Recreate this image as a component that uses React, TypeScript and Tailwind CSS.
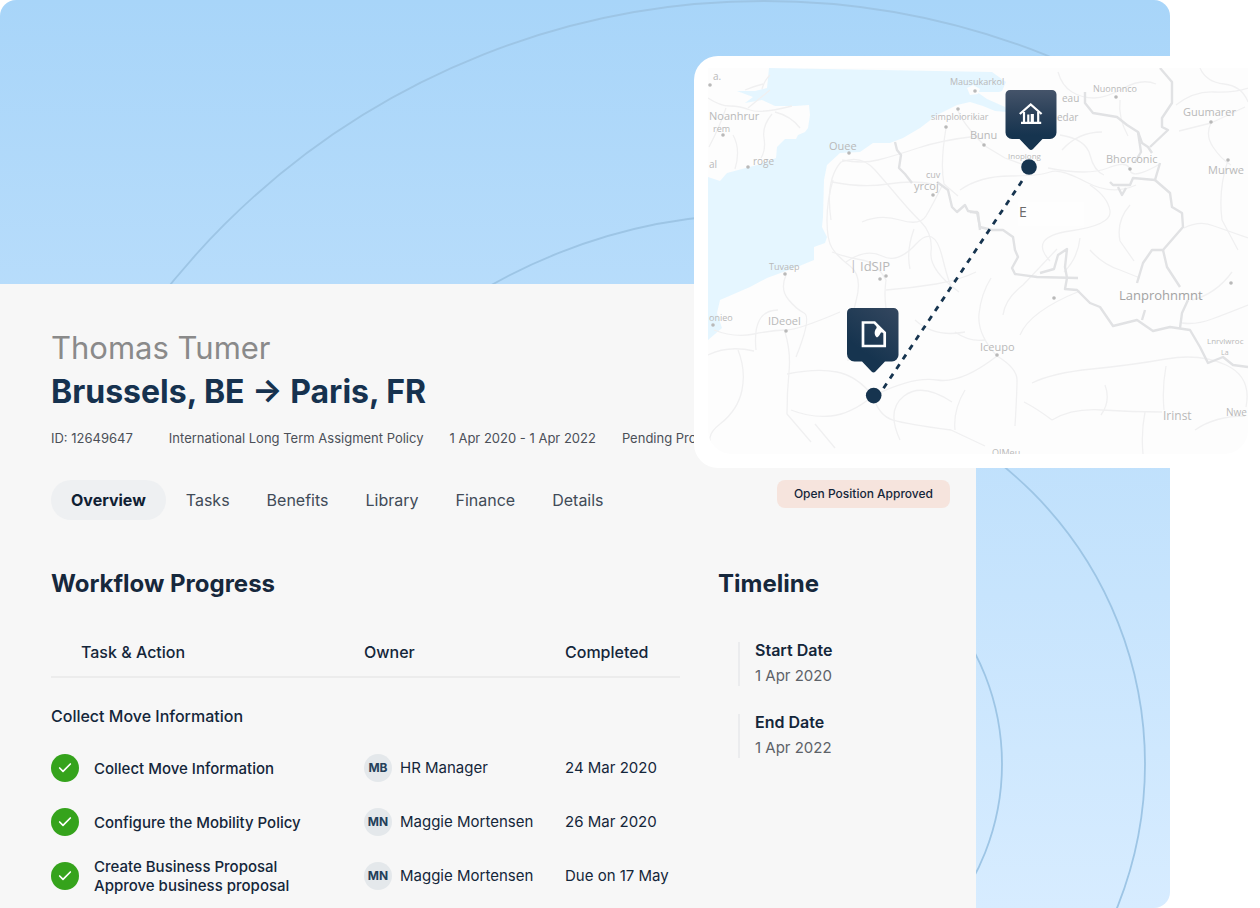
import { Check } from 'lucide-react';
import { useState } from 'react';

const tabs = ['Overview', 'Tasks', 'Benefits', 'Library', 'Finance', 'Details'];

const tasks = [
  { lines: ['Collect Move Information'], initials: 'MB', owner: 'HR Manager', completed: '24 Mar 2020' },
  { lines: ['Configure the Mobility Policy'], initials: 'MN', owner: 'Maggie Mortensen', completed: '26 Mar 2020' },
  {
    lines: ['Create Business Proposal', 'Approve business proposal'],
    initials: 'MN',
    owner: 'Maggie Mortensen',
    completed: 'Due on 17 May',
  },
];

const timeline = [
  { label: 'Start Date', date: '1 Apr 2020' },
  { label: 'End Date', date: '1 Apr 2022' },
];

// Map place names: text, x, baseline y, font size
const places: [string, number, number, number][] = [
  ['a.', 713, 80, 10],
  ['Noanhrur', 709, 120, 11],
  ['rem', 713, 132, 9],
  ['al', 709, 168, 10],
  ['roge', 753, 165, 10],
  ['Ouee', 829, 150, 11],
  ['Mausukarkol', 950, 85, 9],
  ['simploiorikiar', 931, 120, 9],
  ['Bunu', 970, 139, 11],
  ['cuv', 926, 178, 9],
  ['yrcoj', 914, 190, 11],
  ['eau', 1062, 102, 10],
  ['edar', 1057, 121, 10],
  ['Nuonnnco', 1093, 92, 9],
  ['Guumarer', 1183, 116, 11],
  ['Murwe', 1208, 174, 11],
  ['Bhorconic', 1106, 163, 11],
  ['Inoplong', 1008, 159, 8],
  ['Tuvaep', 769, 270, 9],
  ['IdSIP', 860, 271, 13],
  ['|', 850, 270, 12],
  ['onieo', 709, 321, 9],
  ['IDeoel', 768, 325, 11],
  ['Iceupo', 980, 351, 11],
  ['Lnrvlwroc', 1207, 344, 8],
  ['La', 1221, 355, 7],
  ['Irinst', 1163, 420, 12],
  ['Nwe', 1226, 416, 10],
  ['OIMeu', 992, 456, 9],
];

const towns: [number, number][] = [
  [710, 85], [723, 135], [748, 167], [849, 153], [975, 91], [958, 109], [946, 127], [984, 145],
  [933, 195], [1116, 97], [1211, 122], [1228, 160], [1130, 169], [785, 274], [880, 279], [886, 276],
  [713, 325], [786, 331], [997, 355], [1054, 298], [1231, 283],
];

const borders = [
  'M895 142l2 8 4 5-2 13 6 6 7 9',
  'M937 182l11 8 4 17 5 5 8-7 3 6 10 2 2 17',
  'M970 212h7l3 15 12 3 11 0 10 7 2 13 3 7-6 11 3 6 22 3 41 1',
  'M1067 278l-2 11 12 1 13 13 10 4 13 19 24-6 16 11 17-4 20 3 10 17 8 16 15-6 10 8 15 2',
  'M1040 273l14-4 4-14 9-6-2 18 2 11',
  'M1085 92v11l8 10 24 4 10 8 11 7 4 11 6 4 4 6',
  'M1160 68l12 14v21l-10 15v9l6 3-18 17',
  'M1138 132l3 20-6 10M1160 163l-5 17-22-2-3 7-17 0-3-3M1118 187l4 8 4-7',
  'M1155 180l15 13 2 14 10 6 1 14-20 23h-11l-9 13-6 20',
  'M1163 250l4 17 13 20',
  'M1145 310l-3 10M1188 300l-6 13-2 15',
];

const roads = [
  'M708 98q12 8 22 8t20 4 42-4M772 114q-10 12-8 24t-3 20M726 108q-6 18-17 39M748 108l22-18M775 112q16 4 25 16',
  'M733 135q8 14 2 34M745 90q10-4 18-6M770 75q-6 6-8 14',
  'M833 180q-6 20-6 40t5 28 18 18 6 35-8 60M842 160q20 4 36 0t40-12 60-12',
  'M831 220q-6-40 10-58 20-8 34 8t24 28 22 24 10 30 28 40M832 182q30 6 56 2t44 0',
  'M946 128q-6 36-2 56l14 12M942 186q-10 20-16 30t-26 4-38 2M960 190q20-14 50-14t40-4 36 10 50 3',
  'M914 229q-8 22-4 40M886 280q-2 14 0 28M886 290q26-2 50-6t40-12M886 280q-10-18-24-20t-30-8',
  'M786 275q-6 14 2 24t16 14-8 44M846 262q20-14 36-6t34-12 26 12 10 30',
  'M785 332q6 20 4 40t-2 42l24 28M738 350q8 20 4 40t-22 34-4 26M714 330q20 8 40 4t32-4 54-18',
  'M787 374q30-6 50-2t36 24M873 396q-22 18-42 20t-40-6M873 396q6 20 20 24t58 10l34 16M873 396q40-20 64-16t60-24',
  'M997 356q20 12 20 24t-2 46M997 356q-20-22-18-42t12-36M1003 315q2-16 20-30l34-36M1020 335q10-24 60-44',
  'M1032 383q20-10 60-14t74-10 60 6 20 42M1052 420q20-12 50-10t60 2M1166 366q-4 22-2 44M1145 412q-4 20-2 42M1052 420q-16-12-28-18',
  'M1048 168q40 8 60 0t22 2 30-6M1090 185q18 12 20 26t-40 20-20 30M1130 205q-14 16-10 36l14 20M1184 228q16-8 30-2l34 12',
  'M1211 123q-6 12 2 24t18 18M1211 123l-32 8M1176 105q18-14 38-13t34-4M1211 123l34-16M1228 160q-10 30-6 60l16 30',
  'M1058 72q4 14 14 20t22 6 30-10 32-4M1120 100q-2 18 8 36M1062 150q16-18 40-18M1060 135q26 4 30 20t14 20',
  'M1182 323q14 2 30-4t36-14M1192 300q24-6 40-28M1090 250q12 14 30 20l20 8M985 146l20 12 22 8M957 108q4 14 28 38',
  'M708 355q20-10 46-4M815 424l20 24M955 332q14 10 30 8M955 430q-2-20 10-40M1080 238q-2 20-16 34M1195 430q20-14 50-14',
  'M900 440q-14-30 4-44t48 6M915 320q20 18 50 12M756 350q-4-40 22-40M1105 385q6 16-4 30M1200 68q6 14 24 16t24 18',
];

function WorldMap() {
  return (
    <svg
      viewBox="708 68 540 386"
      preserveAspectRatio="xMidYMid slice"
      className="block w-full rounded-b-3xl"
      role="img"
      aria-label="Route between Brussels and Paris"
      fontFamily="'Open Sans', sans-serif"
    >
      <defs>
        <linearGradient id="pin" x1="0" y1="0" x2="0" y2="1">
          <stop offset="0" stopColor="#45546a" />
          <stop offset="0.35" stopColor="#2e435b" />
          <stop offset="0.75" stopColor="#16344f" />
        </linearGradient>
        <linearGradient id="pinSoft" x1="1" y1="0" x2="0.4" y2="1">
          <stop offset="0" stopColor="#34475f" />
          <stop offset="0.8" stopColor="#16344f" />
        </linearGradient>
      </defs>
      <rect x="708" y="68" width="540" height="386" fill="#fdfdfd" />

      {/* Sea */}
      <path
        fill="#e5f6ff"
        d="M769 68l-2 20-12 3-18 0 16 6-8 6 17-3 13 6 20 0 14-1 1 10-2 13-3 4-7 3-2 4-11 0-8 8-1 11-19 7-15 4-15 4-7 8-12-4v163l14-12-5-15 3-13 30-13 17-9 30-11 17-7 0-13 11-4 2-6-5-10 1-10 1-37 3-15 13-12 20-1 13-9h17l13-5 17-10 17-13 20-10 13-3 13 4 12 5 12 1-2-5-18-8-10-7 22 0 3-1 4-9-14-10z"
      />
      <path fill="#fdfdfd" d="M967 88l6-3 7 4-2 5-8 1z" />

      <g fill="none" stroke="#f0f0f1" strokeWidth="1.3" strokeLinejoin="round">
        {roads.map((d) => (
          <path key={d} d={d} />
        ))}
      </g>
      <g fill="none" stroke="#e1e2e4" strokeWidth="2.4" strokeLinejoin="round">
        {borders.map((d) => (
          <path key={d} d={d} />
        ))}
      </g>
      <g fill="#b9b9b9">
        {towns.map(([x, y]) => (
          <circle key={`${x}-${y}`} cx={x} cy={y} r="1.8" />
        ))}
        {places.map(([name, x, y, size]) => (
          <text key={name} x={x} y={y} fontSize={size}>
            {name}
          </text>
        ))}
      </g>
      <text x="1119" y="300" fontSize="13" fill="#a3a3a3">Lanprohnmnt</text>
      <rect x="1018" y="202" width="66" height="24" fill="#fefefe" />
      <text x="1019" y="217" fontSize="14" fill="#6b6b6b">E</text>

      {/* Route */}
      <path d="M1022 181L883 389" stroke="#16344f" strokeWidth="2.8" strokeDasharray="5.6 6" fill="none" />
      <circle cx="1029" cy="167" r="7.8" fill="#16344f" />
      <circle cx="873.7" cy="395.6" r="7.8" fill="#16344f" />

      {/* Home pin */}
      <path
        fill="url(#pin)"
        d="M1010 90h42a4.500 4.500 0 0 1 4.500 4.500v38a6.500 6.500 0 0 1-6.500 6.500h-7.500l-9.500 10q-2 2-4 0l-9.500-10h-7.500a6.500 6.500 0 0 1-6.500-6.500v-38a4.500 4.500 0 0 1 4.500-4.500z"
      />
      <g fill="none" stroke="#fff" strokeWidth="2.200">
        <path d="M1019.800 114l10.900-9.600 10.900 9.600" />
        <path d="M1024 112v10.500M1038.200 112v10.500M1028.300 122v-7.500" />
        <path d="M1032.300 114v8" strokeWidth="3.200" />
        <path d="M1021 122.800h20.200" />
      </g>

      {/* Document pin */}
      <path
        fill="url(#pinSoft)"
        d="M851.500 308h42a5 5 0 0 1 5 5v42a6.500 6.500 0 0 1-6.500 6.500h-7l-9.500 10q-2 2-4 0l-9.500-10h-7.500a7.500 7.500 0 0 1-7.500-7.500v-41a5 5 0 0 1 4.500-5z"
      />
      <path d="M863 322.500h11.500l10.200 10.200v13.300h-21.700z" fill="none" stroke="#fff" strokeWidth="2.700" />
      <path d="M876.500 325.500c.5 2 0 3-1 4-1.500 3-1 6.500 1.500 8 2-1 3-3.500 4-5l4.500-.5z" fill="#fff" />
    </svg>
  );
}

export default function App() {
  const [activeTab, setActiveTab] = useState('Overview');

  return (
    <div className="relative min-h-screen overflow-hidden bg-white pr-[90px] font-['Inter',sans-serif] text-[#14263a]">
      <div className="relative flex min-h-screen flex-col overflow-hidden rounded-t-2xl rounded-br-2xl bg-gradient-to-b from-[#a8d5f9] to-[#d7ecff] pt-[284px]">
        {/* Rings behind the panel */}
        <svg className="absolute inset-0 h-full w-full" aria-hidden="true">
          <g fill="none" stroke="#9dc5e5" strokeWidth="1.8">
            <circle cx="761" cy="764" r="241" />
            <circle cx="761" cy="764" r="384" />
            <circle cx="762" cy="764" r="550" />
            <circle cx="764" cy="764" r="763" />
          </g>
        </svg>

        <main className="relative mr-[194px] flex-1 bg-[#f7f7f7] pt-11 pr-[26px] pl-[51px]">
          <header>
            <p className="text-[31px] leading-10 text-[#8a8a8a]">Thomas Tumer</p>
            <h1 className="mt-1 text-[32px] leading-10 font-bold text-[#16324f]">Brussels, BE → Paris, FR</h1>
            <div className="mt-4 flex text-[13px] leading-5 whitespace-nowrap text-[#4b5058]">
              <span className="mr-9">ID: 12649647</span>
              <span className="mr-[26px]">International Long Term Assigment Policy</span>
              <span className="mr-[26px]">1 Apr 2020 - 1 Apr 2022</span>
              <span>Pending Proposal</span>
            </div>
          </header>

          <div className="mt-8 flex items-start justify-between">
            <nav className="flex items-center gap-5">
              {tabs.map((tab) => (
                <button
                  key={tab}
                  onClick={() => setActiveTab(tab)}
                  className={
                    tab === activeTab
                      ? 'h-10 rounded-full bg-[#eef0f2] px-5 font-bold text-[#0f2033]'
                      : 'mr-[17px] h-10 text-[#414b57]'
                  }
                >
                  {tab}
                </button>
              ))}
            </nav>
            <span className="rounded-lg bg-[#f6e4dd] px-[17px] py-1 text-xs leading-5 font-medium whitespace-nowrap">
              Open Position Approved
            </span>
          </div>

          <div className="mt-12 flex gap-[38px]">
            <section className="w-[629px]">
              <h2 className="text-2xl leading-8 font-bold text-[#16283c]">Workflow Progress</h2>
              <table className="mt-10 w-full table-fixed text-left text-[15px]">
                <thead>
                  <tr className="h-[37px] border-b-2 border-[#ececec] align-top text-base">
                    <th className="w-[313px] pl-[30px] font-medium">Task &amp; Action</th>
                    <th className="w-[201px] font-medium">Owner</th>
                    <th className="font-medium">Completed</th>
                  </tr>
                </thead>
                <tbody>
                  <tr>
                    <th colSpan={3} className="h-[64px] pt-3 text-base font-medium">
                      Collect Move Information
                    </th>
                  </tr>
                  {tasks.map((task) => (
                    <tr key={task.lines[0]} className="h-[54px]">
                      <td>
                        <div className="flex items-center gap-[15px] leading-[19px] font-medium">
                          <span className="flex size-7 shrink-0 items-center justify-center rounded-full bg-[#35a31c]">
                            <Check className="size-4 text-white" strokeWidth={2.5} />
                          </span>
                          <span>
                            {task.lines.map((line) => (
                              <span key={line} className="block">{line}</span>
                            ))}
                          </span>
                        </div>
                      </td>
                      <td>
                        <div className="flex items-center gap-2 whitespace-nowrap">
                          <span className="flex size-7 items-center justify-center rounded-full bg-[#e4e8eb] text-xs font-bold text-[#24405a]">
                            {task.initials}
                          </span>
                          {task.owner}
                        </div>
                      </td>
                      <td className="whitespace-nowrap">{task.completed}</td>
                    </tr>
                  ))}
                </tbody>
              </table>
            </section>

            <section>
              <h2 className="text-2xl leading-8 font-bold text-[#16283c]">Timeline</h2>
              <dl className="mt-[42px] ml-5 space-y-7">
                {timeline.map((item) => (
                  <div key={item.label} className="flex h-11 flex-col justify-center border-l-2 border-[#ebecee] pl-[15px]">
                    <dt className="leading-6 font-semibold">{item.label}</dt>
                    <dd className="text-[15px] leading-7 text-[#5d6268]">{item.date}</dd>
                  </div>
                ))}
              </dl>
            </section>
          </div>
        </main>
      </div>

      {/* Map card floats over the panel and the page edge */}
      <div className="absolute top-14 right-0 w-[566px] rounded-3xl bg-white pt-3 pr-3 pb-[14px] pl-[14px]">
        <WorldMap />
      </div>
    </div>
  );
}
